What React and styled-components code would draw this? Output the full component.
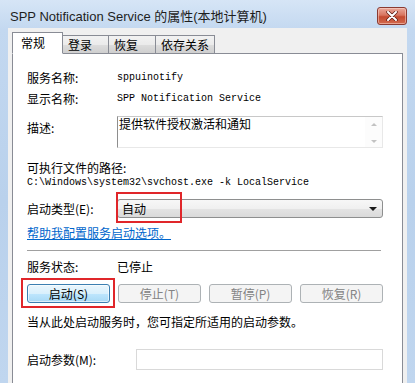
import styled, { createGlobalStyle } from 'styled-components'

const GlobalStyle = createGlobalStyle`
  html, body {
    margin: 0;
    padding: 0;
    background: #ffffff;
  }
  body {
    font-family: "Noto Sans CJK SC", "Noto Sans", sans-serif;
    font-size: 12px;
    color: #000;
  }
`

const cjk = `"Noto Sans CJK SC", "Noto Sans", sans-serif`
const mono = `"Liberation Mono", "Noto Sans CJK SC", monospace`

const Frame = styled.div`
  width: 415px;
  height: 383px;
  overflow: hidden;
  box-sizing: border-box;
  padding: 0 8px 0 8px;
  background: linear-gradient(180deg, #d6e5f6 0px, #c3d8f0 30px, #b9d1ec 200px, #c0d6ef 383px);
  display: flex;
  flex-direction: column;
`

const TitleBar = styled.div`
  height: 28px;
  display: flex;
  align-items: center;
  justify-content: space-between;
  padding: 0 0 0 2px;
`

const Title = styled.div`
  font-family: "Liberation Sans", ${cjk};
  font-size: 13px;
  color: #1e1e1e;
  padding-top: 2px;
`

const CloseButton = styled.div`
  width: 30px;
  height: 18px;
  margin-top: 4px;
  box-sizing: border-box;
  border: 1px solid #8a3a32;
  border-radius: 3px;
  background: linear-gradient(180deg, #e9a99c 0%, #d8745f 45%, #c44a30 55%, #d26a4f 100%);
  display: flex;
  align-items: center;
  justify-content: center;
  box-shadow: inset 0 0 0 1px rgba(255, 220, 210, 0.5);
`

const Client = styled.div`
  flex: 1;
  background: #f0f0f0;
  padding: 5px 4px 0 4px;
  display: flex;
  flex-direction: column;
`

const TabStrip = styled.div`
  display: flex;
  align-items: flex-end;
  height: 21px;
  position: relative;
  z-index: 1;
  margin-bottom: -1px;
`

const Tab = styled.div`
  box-sizing: border-box;
  width: ${p => p.$w}px;
  height: ${p => (p.$active ? 22 : 19)}px;
  padding-left: ${p => (p.$active ? 8 : 5)}px;
  margin-left: ${p => (p.$first ? 0 : -1)}px;
  border: 1px solid #898c95;
  border-bottom: ${p => (p.$active ? '1px solid #ffffff' : '1px solid #898c95')};
  background: ${p => (p.$active ? '#ffffff' : 'linear-gradient(180deg, #f2f2f2 0%, #ebebeb 50%, #dddddd 51%, #cfcfcf 100%)')};
  font-family: ${cjk};
  font-size: 12px;
  line-height: ${p => (p.$active ? 20 : 17)}px;
  color: #000;
  position: relative;
  z-index: ${p => (p.$active ? 2 : 1)};
  align-self: flex-end;
`

const Panel = styled.div`
  flex: 1;
  background: #ffffff;
  border: 1px solid #898c95;
  border-bottom: none;
  padding: 16px 0 0 14px;
  display: flex;
  flex-direction: column;
`

const Row = styled.div`
  display: flex;
  align-items: ${p => p.$align || 'center'};
  height: ${p => p.$h || 16}px;
  margin-top: ${p => p.$mt || 0}px;
`

const Label = styled.div`
  width: ${p => p.$w || 90}px;
  flex-shrink: 0;
  font-family: ${cjk};
  font-size: 12px;
  line-height: 16px;
  padding-top: ${p => p.$pt || 0}px;
  white-space: nowrap;
`

const Mono = styled.div`
  font-family: ${mono};
  font-size: 10px;
  line-height: 14px;
  white-space: nowrap;
`

const Text = styled.div`
  font-family: ${cjk};
  font-size: 12px;
  line-height: 16px;
  height: ${p => p.$h || 16}px;
  margin-top: ${p => p.$mt || 0}px;
  white-space: nowrap;
  color: ${p => p.$color || '#000'};
`

const DescBox = styled.div`
  width: 266px;
  height: 32px;
  box-sizing: border-box;
  border-top: 1px solid #c8c8c8;
  border-left: 1px solid #8e8e8e;
  border-right: 1px solid #e8e8e8;
  border-bottom: 1px solid #e8e8e8;
  display: flex;
  background: #fff;
`

const DescText = styled.div`
  flex: 1;
  font-family: ${cjk};
  font-size: 12px;
  line-height: 14px;
  padding-left: 1px;
`

const ScrollBar = styled.div`
  width: 17px;
  display: flex;
  flex-direction: column;
  justify-content: space-between;
  align-items: center;
  padding: 6px 0 4px 0;
  background: #fcfcfc;
`

const Arrow = styled.div`
  width: 0;
  height: 0;
  border-left: 3px solid transparent;
  border-right: 3px solid transparent;
  ${p => (p.$down ? 'border-top: 3px solid #c2c2c2;' : 'border-bottom: 3px solid #c2c2c2;')}
`

const Anchor = styled.div`
  position: relative;
`

const Highlight = styled.div`
  position: absolute;
  left: ${p => p.$l}px;
  top: ${p => p.$t}px;
  width: ${p => p.$w}px;
  height: ${p => p.$h}px;
  box-sizing: border-box;
  border: 2px solid #e0262a;
  pointer-events: none;
`

const Select = styled.div`
  width: 266px;
  height: 19px;
  box-sizing: border-box;
  border: 1px solid #8e8f8f;
  border-radius: 3px;
  background: linear-gradient(180deg, #f7f7f7 0%, #f0f0f0 50%, #e4e4e4 51%, #dadada 100%);
  display: flex;
  align-items: center;
  justify-content: space-between;
  padding: 0 5px 0 4px;
  font-family: ${cjk};
  font-size: 12px;
`

const SelectValue = styled.div`
  line-height: 16px;
`

const DropArrow = styled.div`
  width: 0;
  height: 0;
  border-left: 4px solid transparent;
  border-right: 4px solid transparent;
  border-top: 4px solid #1a1a1a;
`

const Link = styled.div`
  font-family: ${cjk};
  font-size: 12px;
  line-height: 16px;
  height: 16px;
  margin-top: 7px;
  color: #0066cc;
  text-decoration: underline;
  white-space: nowrap;
`

const Separator = styled.div`
  width: 354px;
  height: 1px;
  margin-top: 9px;
  background: #a0a0a0;
  border-bottom: 1px solid #ffffff;
`

const Buttons = styled.div`
  display: flex;
  gap: 8px;
  margin-top: 9px;
  height: 19px;
`

const Button = styled.div`
  width: 83px;
  height: 19px;
  box-sizing: border-box;
  border-radius: 3px;
  border: 1px solid ${p => (p.$focused ? '#3c7fb1' : '#adb2b5')};
  background: ${p => (p.$focused
    ? 'linear-gradient(180deg, #eaf6fd 0%, #d9f0fc 50%, #bee6fd 51%, #a7d9f5 100%)'
    : '#f4f4f4')};
  box-shadow: ${p => (p.$focused ? 'inset 0 0 0 1px rgba(255,255,255,0.6)' : 'none')};
  color: ${p => (p.$focused ? '#000' : '#838383')};
  font-family: ${cjk};
  font-size: 12px;
  line-height: 17px;
  text-align: center;
  white-space: nowrap;
`

const ParamInput = styled.div`
  width: 247px;
  height: 21px;
  box-sizing: border-box;
  border: 1px solid #d9d9d9;
  background: #ffffff;
`

const tabs = [
  { name: '常规', w: 51, active: true },
  { name: '登录', w: 47 },
  { name: '恢复', w: 48 },
  { name: '依存关系', w: 60 },
]

const CloseIcon = () => (
  <svg width="14" height="10" viewBox="0 0 14 10">
    <path d="M3 1 L11 9 M11 1 L3 9" stroke="#5a1a12" strokeWidth="3.4" strokeLinecap="round" />
    <path d="M3 1 L11 9 M11 1 L3 9" stroke="#ffffff" strokeWidth="2" strokeLinecap="round" />
  </svg>
)

const App = () => (
  <>
    <GlobalStyle />
    <Frame>
      <TitleBar>
        <Title>SPP Notification Service 的属性(本地计算机)</Title>
        <CloseButton><CloseIcon /></CloseButton>
      </TitleBar>
      <Client>
        <TabStrip>
          {tabs.map((t, i) => (
            <Tab key={t.name} $w={t.w} $active={t.active} $first={i === 0}>{t.name}</Tab>
          ))}
        </TabStrip>
        <Panel>
          <Row>
            <Label>服务名称:</Label>
            <Mono>sppuinotify</Mono>
          </Row>
          <Row $mt={5}>
            <Label>显示名称:</Label>
            <Mono>SPP Notification Service</Mono>
          </Row>
          <Row $mt={9} $h={32} $align="flex-start">
            <Label $pt={4}>描述:</Label>
            <DescBox>
              <DescText>提供软件授权激活和通知</DescText>
              <ScrollBar>
                <Arrow />
                <Arrow $down />
              </ScrollBar>
            </DescBox>
          </Row>
          <Text $mt={12}>可执行文件的路径:</Text>
          <Mono>C:\Windows\system32\svchost.exe -k LocalService</Mono>
          <Row $mt={9} $h={19}>
            <Label>启动类型(E):</Label>
            <Anchor>
              <Select>
                <SelectValue>自动</SelectValue>
                <DropArrow />
              </Select>
              <Highlight $l={-1} $t={-7} $w={66} $h={31} />
            </Anchor>
          </Row>
          <Link>帮助我配置服务启动选项。</Link>
          <Separator />
          <Row $mt={7}>
            <Label>服务状态:</Label>
            <Text>已停止</Text>
          </Row>
          <Buttons>
            <Anchor>
              <Button $focused>启动(S)</Button>
              <Highlight $l={-6} $t={-6} $w={94} $h={30} />
            </Anchor>
            <Button>停止(T)</Button>
            <Button>暂停(P)</Button>
            <Button>恢复(R)</Button>
          </Buttons>
          <Text $mt={11}>当从此处启动服务时，您可指定所适用的启动参数。</Text>
          <Row $mt={19} $h={21}>
            <Label $w={109}>启动参数(M):</Label>
            <ParamInput />
          </Row>
        </Panel>
      </Client>
    </Frame>
  </>
)

export default App
